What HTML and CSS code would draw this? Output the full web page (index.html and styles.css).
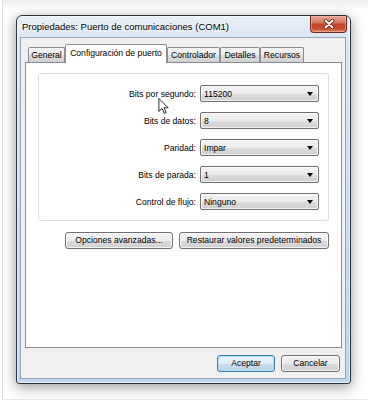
FILE: index.html
```html
<!DOCTYPE html>
<html lang="es">
<head>
<meta charset="utf-8">
<title>Propiedades: Puerto de comunicaciones (COM1)</title>
<link rel="stylesheet" href="styles.css">
</head>
<body>
<div class="screen">
  <div class="window">
    <div class="titlebar">
      <span class="title">Propiedades: Puerto de comunicaciones (COM1)</span>
      <div class="close">
        <svg width="12" height="10" viewBox="0 0 12 10">
          <path d="M2.5 1.5 L9.5 8.5 M9.5 1.5 L2.5 8.5" stroke="#5a1f14" stroke-width="3.6" stroke-linecap="round" fill="none"/>
          <path d="M2.5 1.5 L9.5 8.5 M9.5 1.5 L2.5 8.5" stroke="#ffffff" stroke-width="2" stroke-linecap="round" fill="none"/>
        </svg>
      </div>
    </div>
    <div class="client">
      <div class="tabs">
        <div class="tab tab-general">General</div>
        <div class="tab tab-selected">Configuración de puerto</div>
        <div class="tab tab-controlador">Controlador</div>
        <div class="tab tab-detalles">Detalles</div>
        <div class="tab tab-recursos">Recursos</div>
      </div>
      <div class="panel">
        <div class="group">
          <label class="label">Bits por segundo:</label>
          <div class="combo"><span>115200</span><i class="arrow"></i></div>
          <label class="label">Bits de datos:</label>
          <div class="combo"><span>8</span><i class="arrow"></i></div>
          <label class="label">Paridad:</label>
          <div class="combo"><span>Impar</span><i class="arrow"></i></div>
          <label class="label">Bits de parada:</label>
          <div class="combo"><span>1</span><i class="arrow"></i></div>
          <label class="label">Control de flujo:</label>
          <div class="combo"><span>Ninguno</span><i class="arrow"></i></div>
        </div>
        <div class="actions">
          <button class="btn btn-advanced">Opciones avanzadas...</button>
          <button class="btn btn-restore">Restaurar valores predeterminados</button>
        </div>
      </div>
      <div class="footer">
        <button class="btn btn-default btn-ok">Aceptar</button>
        <button class="btn btn-cancel">Cancelar</button>
      </div>
    </div>
  </div>
  <svg class="cursor" width="11" height="16" viewBox="0 0 12 19">
    <path d="M0.5 0.5 L0.5 16 L4.3 12.4 L7 18.3 L9.2 17.3 L6.6 11.6 L11.5 11.6 Z" fill="#fff" stroke="#000" stroke-width="1" stroke-linejoin="miter"/>
  </svg>
</div>
</body>
</html>
```
FILE: styles.css
```css
* { box-sizing: border-box; }
html, body {
  margin: 0;
  padding: 0;
  background: #ffffff;
  font-family: "Liberation Sans", Arial, sans-serif;
  font-size: 8.6px;
  color: #000;
}
.screen {
  position: relative;
  width: 366px;
  height: 400px;
  margin-left: 2px;
  border-left: 1px solid #e0e0e0;
  border-bottom: 1px solid #e6e6e6;
  padding: 15px 0 0 13px;
  background: linear-gradient(#ececec, #ffffff 10px);
  overflow: hidden;
}
.window {
  width: 335px;
  height: 369px;
  border: 1px solid #2c3440;
  border-radius: 6px 6px 3px 3px;
  background: linear-gradient(180deg, #e8eff8 0%, #d7e5f4 8%, #c3d9f0 60%, #bcd6f2 100%);
  box-shadow: 0 3px 14px rgba(0,0,0,0.42), inset 0 0 0 1px rgba(255,255,255,0.6);
  padding: 0 4px 4px 3px;
  display: flex;
  flex-direction: column;
}
.titlebar {
  height: 21px;
  display: flex;
  justify-content: space-between;
  align-items: flex-start;
}
.title {
  align-self: center;
  padding-left: 2px;
  font-size: 9.5px;
  color: #000;
  text-shadow: 0 0 6px #fff, 0 0 3px #fff;
  white-space: nowrap;
}
.close {
  width: 37px;
  height: 17px;
  margin-right: -1px;
  border: 1px solid #6b2b20;
  border-top: none;
  border-radius: 0 0 4px 4px;
  background: linear-gradient(180deg, #e8a899 0%, #d77a64 40%, #c4442b 52%, #c94d2f 80%, #de8a63 100%);
  box-shadow: inset 0 0 0 1px rgba(255,200,180,0.45);
  display: flex;
  align-items: center;
  justify-content: center;
}
.client {
  flex: 1;
  border: 1px solid #9aa9b9;
  background: #f0f0f0;
  padding: 6px 3px 6px 4px;
  display: flex;
  flex-direction: column;
}
.tabs {
  height: 18px;
  display: flex;
  align-items: flex-end;
  padding-left: 3px;
  position: relative;
  z-index: 2;
}
.tab {
  height: 15px;
  border: 1px solid #898c95;
  border-bottom: none;
  border-radius: 2px 2px 0 0;
  background: linear-gradient(180deg, #f3f3f3 0%, #ebebeb 50%, #dddddd 51%, #d2d2d2 100%);
  display: flex;
  align-items: center;
  justify-content: center;
  white-space: nowrap;
  line-height: 1;
}
.tab-general { width: 37px; }
.tab-selected {
  width: 102px;
  height: 19px;
  margin-bottom: -1px;
  background: #ffffff;
  padding-bottom: 2px;
}
.tab-controlador { width: 53px; }
.tab-detalles { width: 40px; }
.tab-recursos { width: 44px; }
.panel {
  height: 286px;
  border: 1px solid #898c95;
  background: #ffffff;
  padding: 10px 12px 0 12px;
}
.group {
  height: 148px;
  border: 1px solid #d5dfe5;
  border-radius: 3px;
  padding: 11px 0 0 0;
  display: grid;
  grid-template-columns: 157px 119px;
  grid-auto-rows: 17px;
  column-gap: 4px;
  row-gap: 10px;
}
.label {
  display: flex;
  align-items: center;
  justify-content: flex-end;
  white-space: nowrap;
}
.combo {
  height: 17px;
  border: 1px solid #707070;
  border-radius: 2px;
  background: linear-gradient(180deg, #f2f2f2 0%, #ebebeb 50%, #dddddd 51%, #cfcfcf 100%);
  box-shadow: inset 0 0 0 1px rgba(255,255,255,0.7);
  display: flex;
  align-items: center;
  justify-content: space-between;
  padding: 0 5px 0 3px;
}
.arrow {
  width: 0;
  height: 0;
  border-left: 3.5px solid transparent;
  border-right: 3.5px solid transparent;
  border-top: 4px solid #000;
  margin-top: 1px;
}
.actions {
  margin-top: 11px;
  display: flex;
  justify-content: flex-end;
  gap: 6px;
}
.btn {
  height: 17px;
  border: 1px solid #707070;
  border-radius: 3px;
  background: linear-gradient(180deg, #f2f2f2 0%, #ebebeb 50%, #dddddd 51%, #cfcfcf 100%);
  box-shadow: inset 0 0 0 1px rgba(255,255,255,0.75);
  font-family: inherit;
  font-size: 8.6px;
  color: #000;
  padding: 0;
  line-height: 1;
  white-space: nowrap;
}
.btn-advanced { width: 108px; }
.btn-restore { width: 150px; }
.footer {
  margin-top: 7px;
  display: flex;
  justify-content: flex-end;
  gap: 6px;
  padding-right: 2px;
}
.btn-ok { width: 58px; }
.btn-cancel { width: 59px; }
.btn-default {
  border-color: #3c7fb1;
  background: linear-gradient(180deg, #eaf6fd 0%, #dcecf7 50%, #c9dfee 51%, #b9d4e7 100%);
  box-shadow: inset 0 0 0 1px #a9ddf6;
}
.cursor {
  position: absolute;
  left: 155px;
  top: 98px;
}
```
